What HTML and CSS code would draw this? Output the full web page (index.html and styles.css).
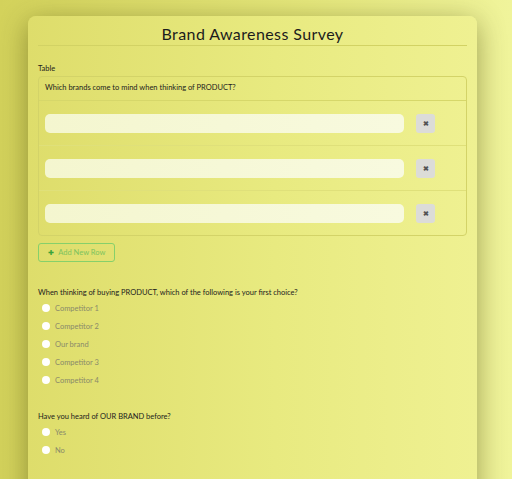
FILE: index.html
```html
<!DOCTYPE html>
<html lang="en">
<head>
    <meta charset="UTF-8">
    <meta name="viewport" content="width=device-width, initial-scale=1.0">
    <title>Brand Awareness Survey</title>
    <link rel="stylesheet" href="styles.css">
</head>
<body>
    <div class="survey">
        <h1 class="title">Brand Awareness Survey</h1>

        <!-- Tabelle mit Marken -->
        <div class="field">
            <div class="field-label">Table</div>
            <div class="table">
                <div class="table-head">Which brands come to mind when thinking of PRODUCT?</div>
                <div class="table-row">
                    <input class="text-input" type="text">
                    <button class="remove-button">&#10006;</button>
                </div>
                <div class="table-row">
                    <input class="text-input" type="text">
                    <button class="remove-button">&#10006;</button>
                </div>
                <div class="table-row">
                    <input class="text-input" type="text">
                    <button class="remove-button">&#10006;</button>
                </div>
            </div>
            <button class="add-button"><span class="plus">&#10010;</span> Add New Row</button>
        </div>

        <div class="field question">
            <div class="question-text">When thinking of buying PRODUCT, which of the following is your first choice?</div>
            <label class="option"><span class="radio"></span>Competitor 1</label>
            <label class="option"><span class="radio"></span>Competitor 2</label>
            <label class="option"><span class="radio"></span>Our brand</label>
            <label class="option"><span class="radio"></span>Competitor 3</label>
            <label class="option"><span class="radio"></span>Competitor 4</label>
        </div>

        <div class="field question">
            <div class="question-text">Have you heard of OUR BRAND before?</div>
            <label class="option"><span class="radio"></span>Yes</label>
            <label class="option"><span class="radio"></span>No</label>
        </div>
    </div>
</body>
</html>
```

FILE: styles.css
```css
body {
    font-family: Lato, "Noto Sans", sans-serif;
    margin: 0;
    padding: 16px 0 0 0;
    height: 100vh;
    box-sizing: border-box;
    overflow: hidden;
    background: linear-gradient(90deg, #d3d25b 0%, #e6e87c 60%, #f0f49b 100%);
    color: #1c1c1c;
}
.survey {
    width: 449px;
    margin-left: 28px;
    height: 520px;
    box-sizing: border-box;
    padding: 8px 10px 0 10px;
    border-radius: 8px;
    background: linear-gradient(90deg, #dedd6b 0%, #e8ea80 55%, #eff192 100%);
    box-shadow: 0 6px 28px rgba(60, 60, 0, 0.45);
}
.title {
    margin: 0;
    font-size: 16px;
    font-weight: 400;
    text-align: center;
    letter-spacing: 0.4px;
    line-height: 20px;
    padding-bottom: 1px;
    border-bottom: 1px solid #d2d264;
}
.field {
    margin-top: 18px;
}
.field-label {
    font-size: 7.5px;
    line-height: 10px;
    margin-bottom: 2px;
}
.table {
    border: 1px solid #d3d368;
    border-radius: 4px;
}
.table-head {
    font-size: 7.5px;
    line-height: 12px;
    padding: 5px 6px 6px 6px;
    border-bottom: 1px solid #d6d76a;
}
.table-row {
    display: flex;
    align-items: center;
    height: 44px;
    padding: 0 6px;
    border-bottom: 1px solid #dfe07a;
}
.table-row:last-child {
    border-bottom: none;
}
.text-input {
    width: 359px;
    height: 19px;
    box-sizing: border-box;
    border: none;
    border-radius: 5px;
    background: linear-gradient(90deg, #f4f6cf 0%, #f8fadf 100%);
    margin: 0;
}
.remove-button {
    width: 19px;
    height: 19px;
    margin-left: 12px;
    padding: 0;
    border: none;
    border-radius: 3px;
    background-color: #dcdcd8;
    color: #555555;
    font-size: 7px;
    font-weight: bold;
    line-height: 19px;
}
.add-button {
    margin-top: 7px;
    width: 77px;
    height: 19px;
    padding: 0;
    border: 1px solid #86d06a;
    border-radius: 3px;
    background: transparent;
    color: #7cc35e;
    font-family: inherit;
    font-size: 7.5px;
}
.plus {
    color: #3aa33a;
    font-size: 7px;
    margin-right: 3px;
}
.question {
    margin-top: 25px;
}
.question + .question {
    margin-top: 22px;
}
.question-text {
    font-size: 7.5px;
    line-height: 12px;
}
.option {
    display: flex;
    align-items: center;
    height: 18px;
    padding-left: 4px;
    font-size: 7.5px;
    color: #8a8a6a;
}
.radio {
    width: 8px;
    height: 8px;
    border-radius: 50%;
    background-color: #ffffff;
    margin-right: 5px;
}
```
